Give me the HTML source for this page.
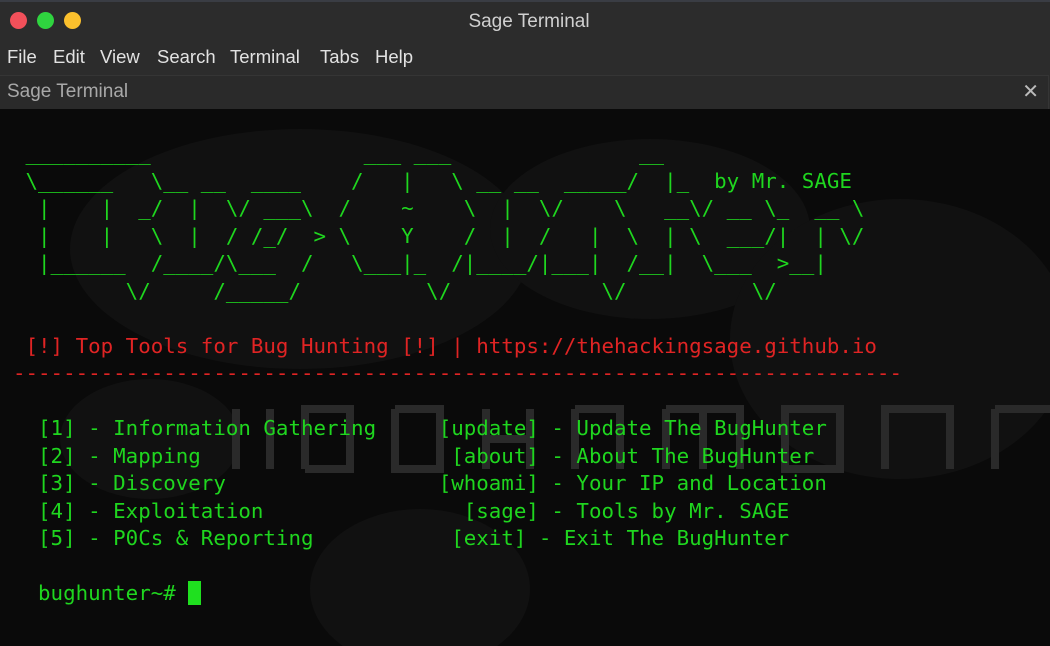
<!DOCTYPE html>
<html><head><meta charset="utf-8"><style>
html,body{margin:0;padding:0;width:1050px;height:646px;overflow:hidden;background:#0b0b0b;font-family:"Liberation Sans",sans-serif}
#hdr{position:absolute;left:0;top:0;width:1050px;height:109px;background:#2c2c2c}
#topline{position:absolute;left:0;top:0;width:1050px;height:2px;background:#3a3d44}
.dot{position:absolute;top:12px;width:17px;height:17px;border-radius:50%}
#title{position:absolute;top:11px;left:0;width:1058px;text-align:center;color:#d0d0d0;font-size:19px}
#menu span{position:absolute;top:46px;color:#e2e2e2;font-size:18.5px}
#tab{position:absolute;top:75px;left:0;width:1048px;height:33px;border-top:1px solid #353535;border-right:1px solid #353535;background:#2a2a2a}
#tab .t{position:absolute;left:7px;top:5px;color:#a8a8a8;font-size:19px}
#tab .x{position:absolute;right:9px;top:3px;color:#bbb;font-size:20px}
#term{position:absolute;left:0;top:109px;width:1050px;height:537px;background:#0a0a0a;overflow:hidden}
pre{position:absolute;left:13px;top:31px;margin:0;font-family:"DejaVu Sans Mono","Liberation Mono",monospace;font-size:20.8px;line-height:27.5px;color:#1fd61f;white-space:pre}
.r{color:#e02424}
.cur{display:inline-block;width:13px;height:24px;background:#1fe01f;vertical-align:-5px}
</style></head><body>
<div id="hdr">
<div id="topline"></div>
<div class="dot" style="left:10px;background:#f2505a"></div>
<div class="dot" style="left:37px;background:#2fd43f"></div>
<div class="dot" style="left:64px;background:#fbc02d"></div>
<div id="title">Sage Terminal</div>
<div id="menu"><span style="left:7px">File</span><span style="left:53px">Edit</span><span style="left:100px">View</span><span style="left:157px">Search</span><span style="left:230px">Terminal</span><span style="left:320px">Tabs</span><span style="left:375px">Help</span></div>
<div id="tab"><div class="t">Sage Terminal</div><div class="x">✕</div></div>
</div>
<div id="term">
<svg width="1050" height="537" style="position:absolute;left:0;top:0">
<g fill="#111111"><ellipse cx="300" cy="140" rx="230" ry="120"/><ellipse cx="650" cy="120" rx="160" ry="90"/><ellipse cx="900" cy="230" rx="170" ry="140"/><ellipse cx="420" cy="480" rx="110" ry="80"/><ellipse cx="150" cy="330" rx="90" ry="60"/></g>
<g fill="none" stroke="#2a2a2a" stroke-width="8">
<path d="M236 300 V360"/><path d="M270 300 V360"/>
<path d="M305 360 V300 H350 V330 M350 330 V360 H305"/>
<path d="M395 300 H440 V360 H395 V300"/>
<path d="M486 300 V360 M486 330 H530 M530 300 V360"/>
<path d="M575 300 V360 M575 300 H620 V360"/>
<path d="M666 300 V360 M666 300 H740 V360 M703 300 V360"/>
<path d="M785 300 H840 V360 H785 Z"/>
<path d="M885 360 V300 H950 V360"/>
<path d="M995 300 H1050"/><path d="M995 300 V360"/>
</g>
</svg>
<pre> __________                 ___ ___               __
 \______   \__ __  ____    /   |   \ __ __  _____/  |_  by Mr. SAGE
  |    |  _/  |  \/ ___\  /    ~    \  |  \/    \   __\/ __ \_  __ \
  |    |   \  |  / /_/  > \    Y    /  |  /   |  \  | \  ___/|  | \/
  |______  /____/\___  /   \___|_  /|____/|___|  /__|  \___  >__|
         \/     /_____/          \/            \/          \/

<span class="r"> [!] Top Tools for Bug Hunting [!] | https://thehackingsage.github.io</span>
<span class="r">-----------------------------------------------------------------------</span>

  [1] - Information Gathering     [update] - Update The BugHunter
  [2] - Mapping                    [about] - About The BugHunter
  [3] - Discovery                 [whoami] - Your IP and Location
  [4] - Exploitation                [sage] - Tools by Mr. SAGE
  [5] - P0Cs &amp; Reporting           [exit] - Exit The BugHunter

  bughunter~# <span class="cur"></span></pre>
</div>
</body></html>
